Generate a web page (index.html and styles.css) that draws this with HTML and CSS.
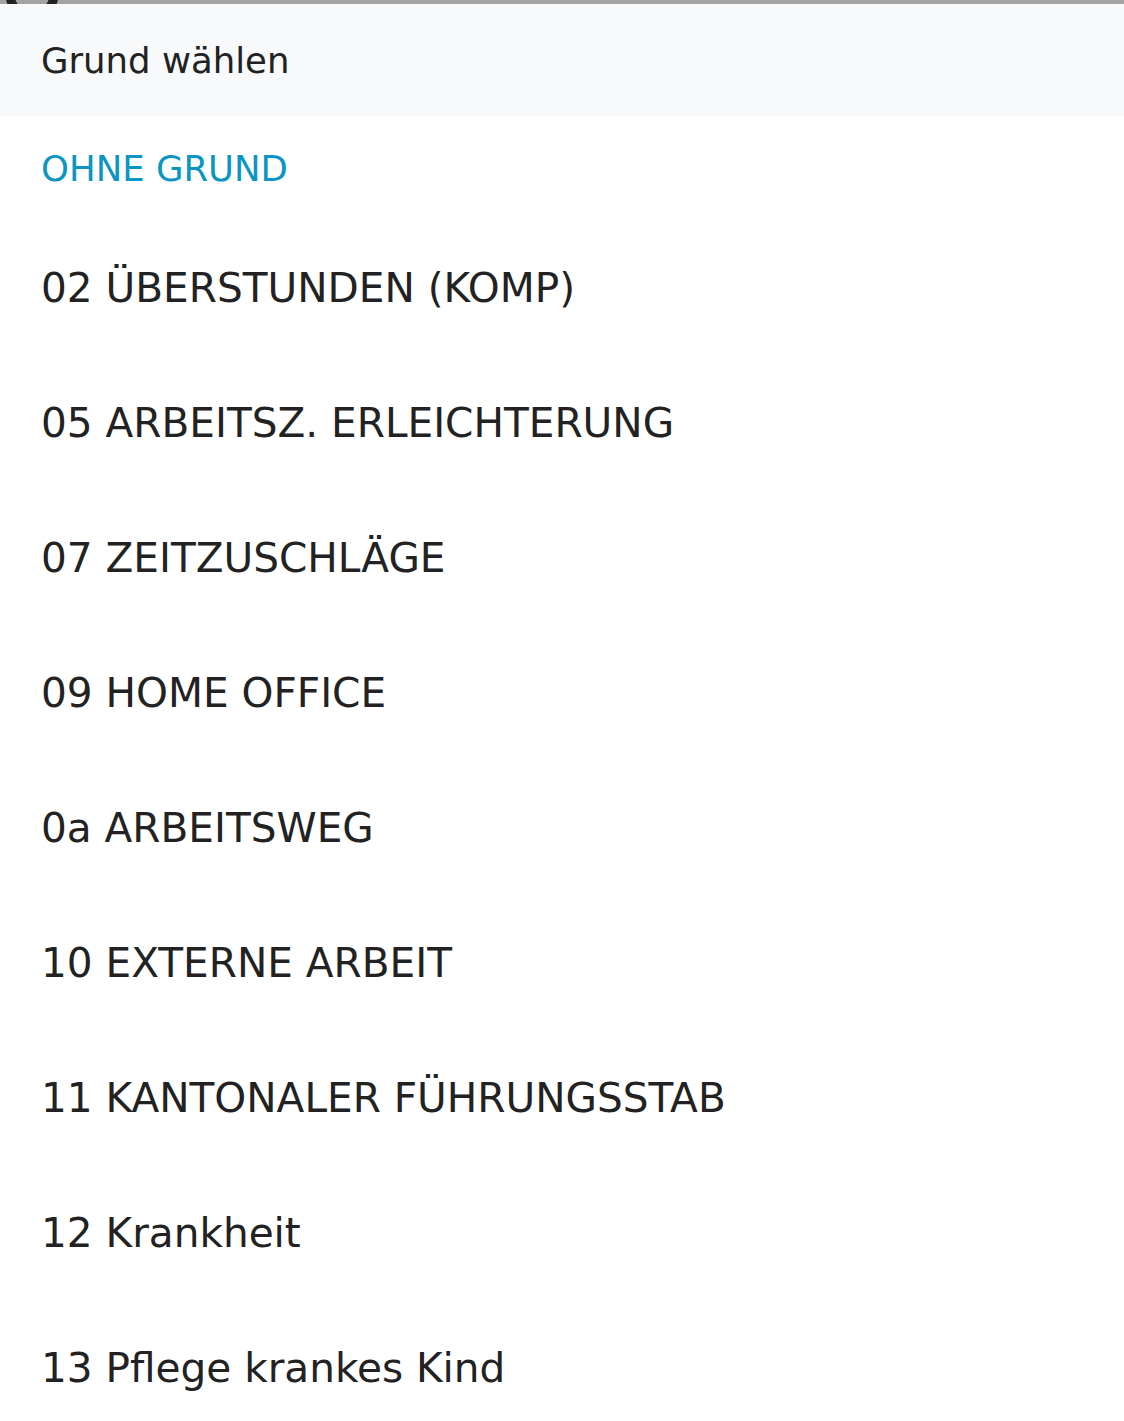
FILE: index.html
```html
<!DOCTYPE html>
<html lang="de">
<head>
<meta charset="utf-8">
<title>Grund wählen</title>
<link rel="stylesheet" href="styles.css">
</head>
<body>
<div class="backdrop">
  <svg class="backdrop-icon" width="64" height="4" viewBox="0 0 64 4" aria-hidden="true">
    <circle cx="32" cy="-6" r="22" fill="none" stroke="#222" stroke-width="9"/>
  </svg>
</div>
<div class="sheet">
  <header class="sheet-header">Grund wählen</header>
  <ul class="reasons">
    <li class="reason reason-none">OHNE GRUND</li>
    <li class="reason">02 ÜBERSTUNDEN (KOMP)</li>
    <li class="reason">05 ARBEITSZ. ERLEICHTERUNG</li>
    <li class="reason">07 ZEITZUSCHLÄGE</li>
    <li class="reason">09 HOME OFFICE</li>
    <li class="reason">0a ARBEITSWEG</li>
    <li class="reason">10 EXTERNE ARBEIT</li>
    <li class="reason">11 KANTONALER FÜHRUNGSSTAB</li>
    <li class="reason">12 Krankheit</li>
    <li class="reason">13 Pflege krankes Kind</li>
  </ul>
</div>
</body>
</html>
```

FILE: styles.css
```css
html, body {
  margin: 0;
  padding: 0;
  background: #ffffff;
}
body {
  font-family: "DejaVu Sans", "Noto Sans", sans-serif;
  color: #222222;
  overflow: hidden;
}
.backdrop {
  height: 4px;
  background: #a3a3a3;
  overflow: hidden;
}
.backdrop-icon {
  display: block;
}
.sheet {
  background: #ffffff;
}
.sheet-header {
  height: 112px;
  background: #f8f9fb;
  display: flex;
  align-items: center;
  padding-left: 41px;
  box-sizing: border-box;
  font-size: 35.5px;
  color: #222222;
}
.reasons {
  list-style: none;
  margin: 0;
  padding: 0;
}
.reason {
  height: 135px;
  display: flex;
  align-items: center;
  padding-left: 41px;
  font-size: 40.6px;
  color: #222222;
  white-space: nowrap;
}
.reason-none {
  height: 104px;
  color: #0a95c3;
  font-size: 35.5px;
}
```
